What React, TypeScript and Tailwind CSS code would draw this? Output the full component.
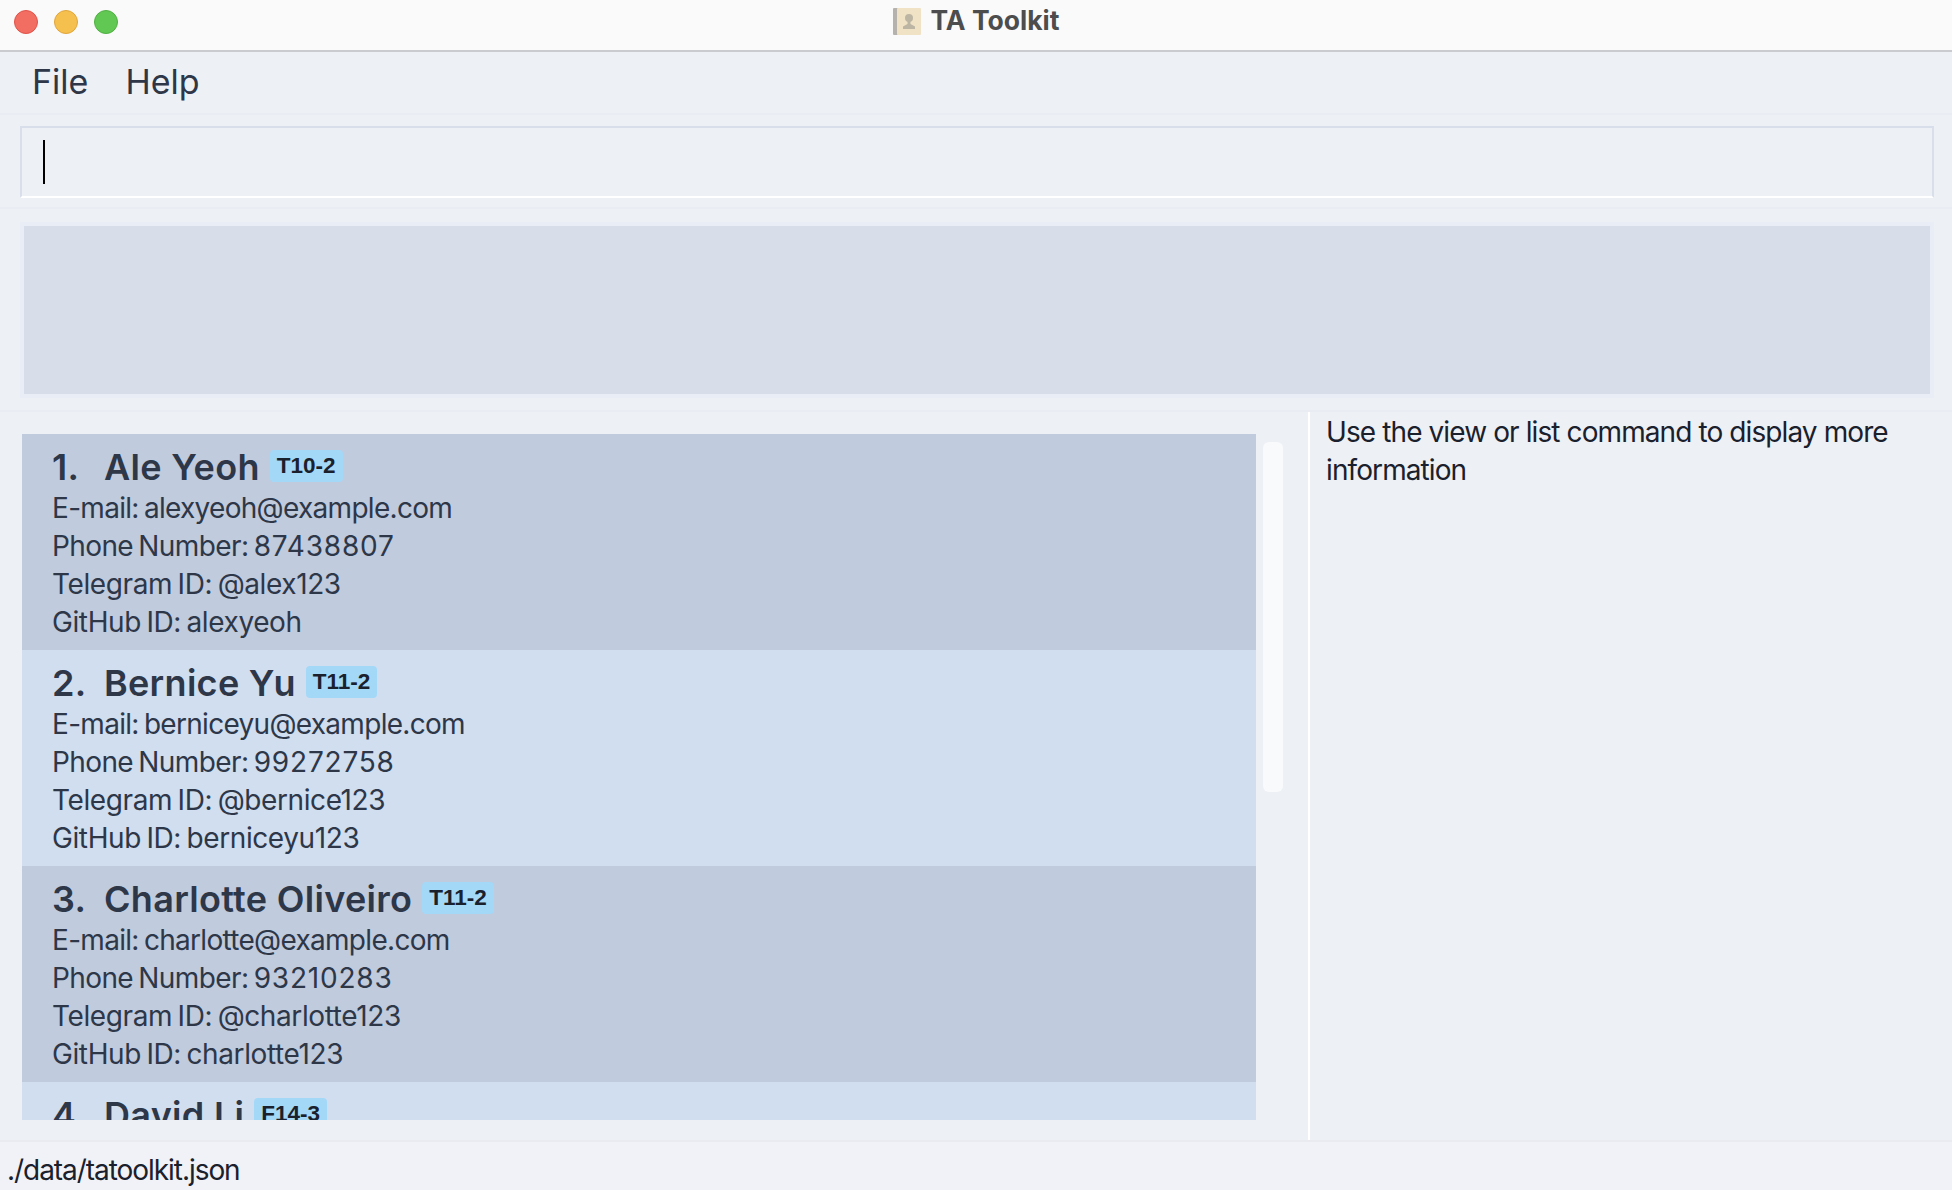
import React from 'react';

interface Student {
  index: number;
  name: string;
  group: string;
  email: string;
  phone: string;
  telegram: string;
  github: string;
}

const students: Student[] = [
  { index: 1, name: 'Ale Yeoh', group: 'T10-2', email: 'alexyeoh@example.com', phone: '87438807', telegram: '@alex123', github: 'alexyeoh' },
  { index: 2, name: 'Bernice Yu', group: 'T11-2', email: 'berniceyu@example.com', phone: '99272758', telegram: '@bernice123', github: 'berniceyu123' },
  { index: 3, name: 'Charlotte Oliveiro', group: 'T11-2', email: 'charlotte@example.com', phone: '93210283', telegram: '@charlotte123', github: 'charlotte123' },
  { index: 4, name: 'David Li', group: 'F14-3', email: 'lidavid@example.com', phone: '91031282', telegram: '@david123', github: 'davidli' },
];

const AppIcon = () => (
  <svg width="28" height="27" viewBox="0 0 28 27" className="mr-[10px]">
    <rect x="0" y="0" width="6" height="27" rx="1" fill="#b5b2ad" />
    <rect x="4" y="0" width="24" height="27" rx="1" fill="#f0e2c4" />
    <circle cx="16" cy="10" r="4" fill="#bdb5a3" />
    <path d="M14.5 13h3v3l4.5 2.5V21H10v-2.5l4.5-2.5z" fill="#bdb5a3" />
  </svg>
);

const StudentCard = ({ student }: { student: Student }) => (
  <div className={`h-[216px] shrink-0 pl-[30px] pt-[10px] text-[#2d3748] ${student.index % 2 === 1 ? 'bg-[#c0cbde]' : 'bg-[#d0def0]'}`}>
    <div className="flex h-[45px] items-center">
      <span className="w-[52px] text-[36px] leading-[46px] font-semibold tracking-[0.3px]">{student.index}.</span>
      <span className="text-[36px] leading-[46px] font-semibold tracking-[0.3px]">{student.name}</span>
      <span className="ml-[10px] mb-[1px] flex h-[32px] items-center rounded-[4px] bg-[#a3d8f7] px-[7px] font-['Liberation_Sans',sans-serif] text-[22.5px] font-bold text-[#1a202c]">
        {student.group}
      </span>
    </div>
    <div className="text-[28px] leading-[38px] [word-spacing:-2px]">
      <p className="tracking-[-0.7px]">E-mail: {student.email}</p>
      <p className="tracking-[-0.6px]">Phone Number: <span className="tracking-[0.8px]">{student.phone}</span></p>
      <p className="tracking-[-0.4px]">Telegram ID: {student.telegram}</p>
      <p className="tracking-[-0.4px]">GitHub ID: {student.github}</p>
    </div>
  </div>
);

export default function App() {
  return (
    <div className="flex h-[1190px] w-[1952px] flex-col overflow-hidden bg-[#edf0f5] font-['Inter',sans-serif]">
      <div className="relative flex h-[52px] shrink-0 items-center justify-center border-b-2 border-[#c9cbcf] bg-[#fafafa] pb-[8px]">
        <div className="absolute left-[14px] top-[10px] flex gap-[16px]">
          <div className="h-[24px] w-[24px] rounded-full border border-[#e0534a] bg-[#f26d62]" />
          <div className="h-[24px] w-[24px] rounded-full border border-[#e0a53c] bg-[#f6c04f]" />
          <div className="h-[24px] w-[24px] rounded-full border border-[#50b043] bg-[#61c854]" />
        </div>
        <AppIcon />
        <span className="text-[26.5px] font-bold text-[#4d4d4d]">TA Toolkit</span>
      </div>

      <div className="flex h-[63px] shrink-0 items-center gap-[37px] border-b-2 border-[#e9edf3] pb-[2px] pl-[32px] text-[34px] text-[#2d3748]">
        <span>File</span>
        <span>Help</span>
      </div>

      <div className="shrink-0 border-b-2 border-[#e9edf3] pb-[9px] pl-[20px] pr-[18px] pt-[11px]">
        <div className="flex h-[72px] items-center border-x-2 border-t-2 border-b-2 border-x-[#d8deea] border-t-[#d8deea] border-b-white pl-[21px]">
          <div className="h-[44px] w-[2px] bg-black" />
        </div>
      </div>

      <div className="shrink-0 border-b-2 border-[#e9edf3] pb-[12px] pl-[20px] pr-[18px] pt-[13px]">
        <div className="h-[176px] border-4 border-[#e9edf5] bg-[#d7deea]" />
      </div>

      <div className="flex min-h-0 flex-1">
        <div className="relative w-[1308px] shrink-0 pl-[22px] pt-[22px]">
          <div className="flex h-[686px] w-[1234px] flex-col overflow-hidden">
            {students.map((student) => (
              <StudentCard key={student.index} student={student} />
            ))}
          </div>
          <div className="absolute left-[1263px] top-[30px] h-[350px] w-[20px] rounded-[6px] bg-[#f9fafc]" />
        </div>
        <div className="flex-1 border-l-2 border-white pl-[16px] pr-[30px] pt-[1px] text-[28px] leading-[38px] tracking-[-0.9px] text-[#1a202c]">
          Use the view or list command to display more information
        </div>
      </div>

      <div className="h-[50px] shrink-0 border-t-2 border-[#e9ebf0] bg-[#f0f2f7] pl-[7px] text-[28px] leading-[56px] tracking-[-1.05px] text-[#1a202c]">
        ./data/tatoolkit.json
      </div>
    </div>
  );
}
